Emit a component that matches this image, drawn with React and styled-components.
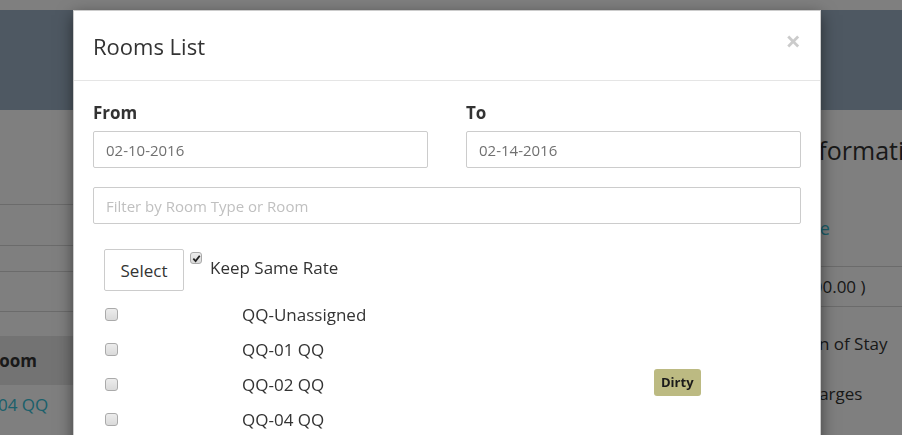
import React from "react";
import styled, { createGlobalStyle } from "styled-components";

const GlobalStyle = createGlobalStyle`
  html, body {
    margin: 0;
    padding: 0;
    overflow: hidden;
  }
  body {
    font-family: "Open Sans", "Liberation Sans", sans-serif;
    color: #333;
  }
  * {
    box-sizing: border-box;
  }
`;

const Page = styled.div`
  position: relative;
  height: 100vh;
  overflow: hidden;
  background: #fff;
  padding-top: 10px;
`;

const TopBar = styled.div`
  height: 100px;
  background: #9cb0c4;
`;

const Main = styled.div`
  display: flex;
`;

const LeftPanel = styled.div`
  width: 420px;
  margin-left: -34px;
  display: flex;
  flex-direction: column;
`;

const Block = styled.div`
  height: ${props => props.h}px;
  border-bottom: 1px solid #d6d6d6;
`;

const TableHead = styled.div`
  margin-top: 24px;
  height: 49px;
  line-height: 49px;
  padding-left: 22px;
  background: #e6e6e6;
  font-size: 17px;
  font-weight: 700;
`;

const TableCell = styled.div`
  padding-top: 8px;
  line-height: 24px;
  font-size: 17px;
`;

const TealLink = styled.a`
  color: #36c0d6;
  text-decoration: none;
  font-size: ${props => props.size || 17}px;
`;

const RightPanel = styled.div`
  margin-left: auto;
  width: 104px;
  white-space: nowrap;
  padding-top: 24px;
  font-size: 17px;
`;

const PanelTitle = styled.h3`
  margin: 0 0 0 -2px;
  font-size: 25px;
  font-weight: 400;
  line-height: 32px;
`;

const LinkLine = styled.div`
  margin-top: 49px;
  line-height: 26px;
  margin-bottom: 24px;
`;

const AmountRow = styled.div`
  height: 41px;
  line-height: 40px;
  border-top: 1px solid #d6d6d6;
  border-bottom: 1px solid #d6d6d6;
`;

const InfoItem = styled.div`
  padding-top: 24px;
  line-height: 26px;
`;

const Backdrop = styled.div`
  position: fixed;
  inset: 0;
  background: rgba(0, 0, 0, 0.5);
`;

const Dialog = styled.div`
  position: absolute;
  top: 10px;
  left: 73px;
  width: 748px;
  background: #fff;
  border: 1px solid rgba(0, 0, 0, 0.2);
  box-shadow: 0 5px 15px rgba(0, 0, 0, 0.5);
`;

const DialogHeader = styled.div`
  height: 70px;
  padding: 0 19px;
  display: flex;
  align-items: center;
  justify-content: space-between;
  border-bottom: 1px solid #e5e5e5;
`;

const DialogTitle = styled.h4`
  margin: 0;
  font-size: 22px;
  font-weight: 400;
  color: #333;
`;

const CloseButton = styled.button`
  border: 0;
  background: transparent;
  padding: 0;
  margin-bottom: 10px;
  font-family: inherit;
  font-size: 27px;
  font-weight: 700;
  line-height: 1;
  color: #000;
  opacity: 0.2;
  cursor: pointer;
`;

const DialogBody = styled.div`
  padding: 20px 19px 0;
`;

const DateRow = styled.div`
  display: grid;
  grid-template-columns: 1fr 1fr;
  column-gap: 38px;
`;

const FieldLabel = styled.label`
  display: block;
  font-size: 17px;
  font-weight: 700;
  line-height: 24px;
  margin-bottom: 6px;
`;

const TextInput = styled.input`
  display: block;
  width: 100%;
  height: 37px;
  margin-top: ${props => props.gap || 0}px;
  padding: 0 12px;
  border: 1px solid #ccc;
  border-radius: 2px;
  font-family: inherit;
  font-size: 15px;
  color: #707070;
  outline: none;
  &::placeholder {
    color: #c0c0c0;
  }
`;

const SelectRow = styled.div`
  margin-top: 25px;
  padding-left: 11px;
  display: flex;
  align-items: flex-start;
  gap: 6px;
`;

const Button = styled.button`
  width: 80px;
  height: 42px;
  border: 1px solid #ccc;
  border-radius: 2px;
  background: #fff;
  font-family: inherit;
  font-size: 17px;
  color: #333;
`;

const KeepLabel = styled.label`
  margin-top: 3px;
  display: flex;
  align-items: flex-start;
  gap: 8px;
  font-size: 17px;
`;

const KeepText = styled.span`
  margin-top: 4px;
  line-height: 24px;
`;

const Box = styled.span`
  display: inline-flex;
  align-items: center;
  justify-content: center;
  width: ${props => props.size}px;
  height: ${props => props.size}px;
  border: 1px solid #aaa;
  border-radius: 3px;
  background: linear-gradient(#ececec, #dadada);
`;

const RoomList = styled.div`
  margin-top: 6px;
`;

const RoomRow = styled.div`
  display: grid;
  grid-template-columns: 137px 412px auto;
  align-items: center;
  height: 35px;
  padding-left: 12px;
  font-size: 17px;
`;

const Badge = styled.span`
  justify-self: start;
  display: inline-block;
  height: 27px;
  line-height: 27px;
  padding: 0 7px;
  margin-bottom: 4px;
  border-radius: 3px;
  background: #bcba82;
  color: #1a1a1a;
  font-size: 13px;
  font-weight: 700;
`;

const CheckBox = ({ checked, size = 13 }) => (
  <Box size={size}>
    {checked && (
      <svg width="9" height="9" viewBox="0 0 10 10">
        <path d="M1.5 5.2 L4 7.8 L8.6 2" fill="none" stroke="#222" strokeWidth="2" />
      </svg>
    )}
  </Box>
);

const rooms = [
  { name: "QQ-Unassigned" },
  { name: "QQ-01 QQ" },
  { name: "QQ-02 QQ", status: "Dirty" },
  { name: "QQ-04 QQ" },
  { name: "QQ-05 QQ" },
];

export default function App() {
  return (
    <>
      <GlobalStyle />
      <Page>
        <TopBar />
        <Main>
          <LeftPanel>
            <Block h={95} />
            <Block h={41} />
            <Block h={26} />
            <Block h={40} />
            <TableHead>Room</TableHead>
            <TableCell>
              <TealLink href="#">QQ-04 QQ</TealLink>
            </TableCell>
          </LeftPanel>
          <RightPanel>
            <PanelTitle>Information</PanelTitle>
            <LinkLine>
              <TealLink href="#" size={18}>Use</TealLink>
            </LinkLine>
            <AmountRow>(100.00 )</AmountRow>
            <InfoItem>Run of Stay</InfoItem>
            <InfoItem>Charges</InfoItem>
          </RightPanel>
        </Main>
        <Backdrop />
        <Dialog>
          <DialogHeader>
            <DialogTitle>Rooms List</DialogTitle>
            <CloseButton>×</CloseButton>
          </DialogHeader>
          <DialogBody>
            <DateRow>
              <div>
                <FieldLabel>From</FieldLabel>
                <TextInput defaultValue="02-10-2016" />
              </div>
              <div>
                <FieldLabel>To</FieldLabel>
                <TextInput defaultValue="02-14-2016" />
              </div>
            </DateRow>
            <TextInput gap={19} placeholder="Filter by Room Type or Room" />
            <SelectRow>
              <Button>Select</Button>
              <KeepLabel>
                <CheckBox checked size={12} />
                <KeepText>Keep Same Rate</KeepText>
              </KeepLabel>
            </SelectRow>
            <RoomList>
              {rooms.map(room => (
                <RoomRow key={room.name}>
                  <CheckBox />
                  <span>{room.name}</span>
                  {room.status ? <Badge>{room.status}</Badge> : <span />}
                </RoomRow>
              ))}
            </RoomList>
          </DialogBody>
        </Dialog>
      </Page>
    </>
  );
}
